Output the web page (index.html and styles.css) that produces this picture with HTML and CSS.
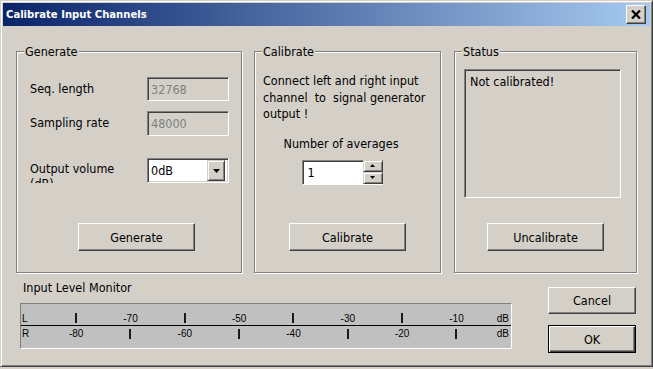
FILE: index.html
```html
<!DOCTYPE html>
<html lang="en">
<head>
    <meta charset="UTF-8">
    <title>Calibrate Input Channels</title>
    <link rel="stylesheet" href="styles.css">
</head>
<body>

    <div class="window">
        <!-- Title bar -->
        <div class="titlebar">
            <span class="title">Calibrate Input Channels</span>
            <button class="close-btn" aria-label="Close">
                <svg width="10" height="9" viewBox="0 0 10 9">
                    <path d="M1 0.5 L9 8.5 M9 0.5 L1 8.5" stroke="#000" stroke-width="2.2" fill="none"/>
                </svg>
            </button>
        </div>

        <div class="content">
            <div class="groups">
                <!-- Generate -->
                <fieldset class="group group-generate">
                    <legend>Generate</legend>
                    <div class="field-row">
                        <span class="field-label">Seq. length</span>
                        <input class="textbox" type="text" value="32768" disabled>
                    </div>
                    <div class="field-row row-rate">
                        <span class="field-label">Sampling rate</span>
                        <input class="textbox textbox-tall" type="text" value="48000" disabled>
                    </div>
                    <div class="field-row row-volume">
                        <span class="field-label label-clip">Output volume<br>(dB)</span>
                        <div class="combo">
                            <span class="combo-value">0dB</span>
                            <span class="combo-btn">
                                <svg width="7" height="4" viewBox="0 0 7 4"><path d="M0 0 H7 L3.5 4 Z" fill="#000"/></svg>
                            </span>
                        </div>
                    </div>
                    <button class="btn btn-generate">Generate</button>
                </fieldset>

                <!-- Calibrate -->
                <fieldset class="group group-calibrate">
                    <legend>Calibrate</legend>
                    <p class="hint">Connect left and right input<br>channel  to  signal generator<br>output !</p>
                    <div class="averages">
                        <span>Number of averages</span>
                        <div class="spinner">
                            <span class="spin-value">1</span>
                            <div class="spin-btns">
                                <span class="spin-btn">
                                    <svg width="5" height="3" viewBox="0 0 5 3"><path d="M0 3 H5 L2.5 0 Z" fill="#000"/></svg>
                                </span>
                                <span class="spin-btn">
                                    <svg width="5" height="3" viewBox="0 0 5 3"><path d="M0 0 H5 L2.5 3 Z" fill="#000"/></svg>
                                </span>
                            </div>
                        </div>
                    </div>
                    <button class="btn btn-center">Calibrate</button>
                </fieldset>

                <!-- Status -->
                <fieldset class="group group-status">
                    <legend>Status</legend>
                    <div class="status-box">Not calibrated!</div>
                    <button class="btn btn-center">Uncalibrate</button>
                </fieldset>
            </div>

            <div class="bottom">
                <div class="monitor">
                    <div class="monitor-label">Input Level Monitor</div>
                    <div class="meter">
                        <div class="meter-row">
                            <span class="ch">L</span>
                            <span class="cell"><i class="tick"></i></span>
                            <span class="cell">-70</span>
                            <span class="cell"><i class="tick"></i></span>
                            <span class="cell">-50</span>
                            <span class="cell"><i class="tick"></i></span>
                            <span class="cell">-30</span>
                            <span class="cell"><i class="tick"></i></span>
                            <span class="cell">-10</span>
                            <span class="unit">dB</span>
                        </div>
                        <div class="meter-row meter-row-r">
                            <span class="ch">R</span>
                            <span class="cell">-80</span>
                            <span class="cell"><i class="tick"></i></span>
                            <span class="cell">-60</span>
                            <span class="cell"><i class="tick"></i></span>
                            <span class="cell">-40</span>
                            <span class="cell"><i class="tick"></i></span>
                            <span class="cell">-20</span>
                            <span class="cell"><i class="tick"></i></span>
                            <span class="unit">dB</span>
                        </div>
                    </div>
                </div>
                <div class="actions">
                    <button class="btn btn-side">Cancel</button>
                    <button class="btn btn-side btn-default">OK</button>
                </div>
            </div>
        </div>
    </div>

</body>
</html>
```

FILE: styles.css
```css
/* Classic dialog look */
body {
    margin: 0;
    background: #d4d0c8;
    font-family: "DejaVu Sans Condensed", "DejaVu Sans", sans-serif;
    font-size: 12.5px;
    color: #000;
}

.window {
    width: 653px;
    height: 367px;
    box-sizing: border-box;
    padding: 2px;
    border: 1px solid;
    border-color: #d4d0c8 #404040 #404040 #d4d0c8;
    box-shadow: inset 1px 1px 0 #fff, inset -1px -1px 0 #808080;
}

.titlebar {
    height: 23px;
    display: flex;
    align-items: center;
    padding: 0 4px 0 3px;
    background: linear-gradient(to right, #0a246a, #a6caf0);
}

.title {
    flex: 1;
    color: #fff;
    font-weight: bold;
    font-size: 11.2px;
}

.close-btn {
    width: 20px;
    height: 19px;
    padding: 0;
    display: flex;
    align-items: center;
    justify-content: center;
    background: #d4d0c8;
    border: 1px solid;
    border-color: #fff #404040 #404040 #fff;
    box-shadow: inset -1px -1px 0 #808080;
}

.content {
    padding: 18px 13px 0 13px;
}

.groups {
    display: flex;
}

/* Etched group boxes */
.group {
    box-sizing: border-box;
    flex: none;
    min-width: 0;
    height: 229px;
    margin: 0;
    padding: 0 0 21px;
    border: 1px solid #808080;
    box-shadow: inset 1px 1px 0 #fff, 1px 1px 0 #fff;
    display: flex;
    flex-direction: column;
    align-items: flex-start;
}

.group legend {
    margin-left: 7px;
    padding: 0 1px;
    line-height: 15px;
    background: #d4d0c8;
}

.group-generate { width: 226px; padding-top: 18px; margin-right: 12px; }
.group-calibrate { width: 187px; margin-right: 13px; }
.group-status { width: 183px; padding-top: 10px; }

.field-row {
    display: flex;
    align-items: center;
    height: 24px;
    margin-left: 13px;
}

.row-rate { margin-top: 10px; height: 25px; }
.row-volume { margin-top: 22px; align-items: flex-start; }

.field-label {
    width: 117px;
    margin-top: -2px;
}

.label-clip {
    margin-top: 3px;
    height: 22px;
    line-height: 15px;
    overflow: hidden;
}

/* Sunken fields */
.textbox,
.combo,
.spinner,
.status-box {
    box-sizing: border-box;
    border: 1px solid;
    border-color: #808080 #fff #fff #808080;
    box-shadow: inset 1px 1px 0 #404040, inset -1px -1px 0 #d4d0c8;
}

.textbox {
    width: 82px;
    height: 24px;
    padding: 0 3px;
    font: inherit;
    color: #808080;
    background: #d4d0c8;
}

.textbox-tall { height: 25px; }

.combo {
    width: 82px;
    height: 25px;
    display: flex;
    align-items: center;
    padding: 2px;
    background: #fff;
}

.combo-value {
    flex: 1;
    padding-left: 1px;
}

.combo-btn,
.spin-btn {
    display: flex;
    align-items: center;
    justify-content: center;
    box-sizing: border-box;
    background: #d4d0c8;
    border: 1px solid;
    border-color: #d4d0c8 #404040 #404040 #d4d0c8;
    box-shadow: inset 1px 1px 0 #fff, inset -1px -1px 0 #808080;
}

.combo-btn {
    width: 18px;
    height: 21px;
    margin-right: 1px;
}

.hint {
    margin: 14px 0 0 8px;
    line-height: 16.5px;
    white-space: pre-wrap;
}

.averages {
    width: 118px;
    margin: 13px 0 0 27px;
    display: flex;
    flex-direction: column;
    align-items: center;
    line-height: 15px;
}

.spinner {
    margin: 9px 0 0 2px;
    width: 81px;
    height: 25px;
    display: flex;
    background: #fff;
    box-shadow: inset 1px 1px 0 #404040;
    border-right: none;
}

.spin-value {
    flex: 1;
    padding: 4px 0 0 5px;
}

.spin-btns {
    display: flex;
    flex-direction: column;
    margin-top: -1px;
}

.spin-btn {
    width: 20px;
    height: 12.5px;
}

.status-box {
    width: 157px;
    height: 129px;
    margin-left: 9px;
    padding: 4px 5px;
}

/* Push buttons */
.btn {
    box-sizing: border-box;
    width: 117px;
    height: 28px;
    margin-top: auto;
    padding: 0;
    font: inherit;
    color: #000;
    background: #d4d0c8;
    border: 1px solid;
    border-color: #fff #404040 #404040 #fff;
    box-shadow: inset -1px -1px 0 #808080;
}

.btn-generate { margin-left: 61px; }
.btn-center { align-self: center; }

.bottom {
    display: flex;
    padding-left: 4px;
}

.monitor {
    width: 492px;
}

.monitor-label {
    margin-top: 7px;
    padding-left: 3px;
    line-height: 15px;
}

.meter {
    box-sizing: border-box;
    height: 46px;
    margin-top: 8px;
    padding-top: 7px;
    background: #c0c0c0;
    border: 1px solid;
    border-color: #808080 #fff #fff #808080;
    font-family: "Liberation Sans", Arial, sans-serif;
    font-size: 10px;
}

.meter-row {
    display: grid;
    grid-template-columns: 27px repeat(8, 54.33px) 1fr;
    align-items: center;
    height: 14px;
    padding-left: 1px;
}

.meter-row-r {
    border-top: 1px solid #000;
    height: 15px;
}

.cell {
    display: flex;
    justify-content: center;
    align-items: center;
}

.unit {
    text-align: right;
    padding-right: 2px;
}

.tick {
    display: block;
    width: 2px;
    height: 10px;
    background: #1a1a1a;
}

.actions {
    margin-left: auto;
    margin-right: 1px;
    display: flex;
    flex-direction: column;
    padding-top: 14px;
    gap: 11px;
}

.btn-side {
    width: 88px;
    height: 27px;
}

.btn-default {
    height: 28px;
    border-color: #000;
    box-shadow: inset 1px 1px 0 #fff, inset -1px -1px 0 #404040, inset -2px -2px 0 #808080;
}
```
